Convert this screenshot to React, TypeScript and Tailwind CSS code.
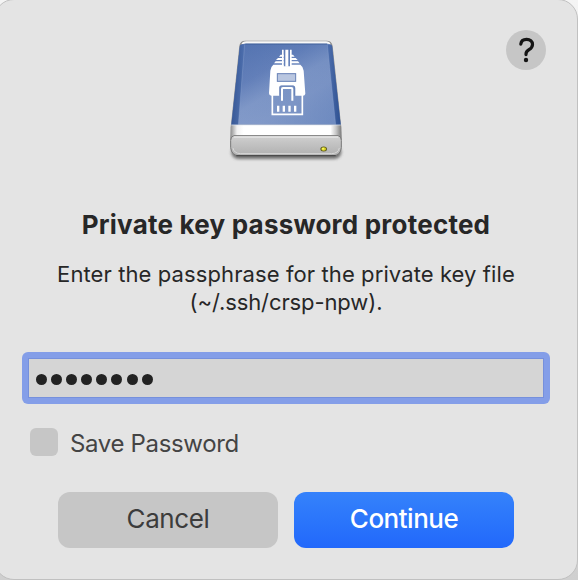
function DriveIcon() {
  return (
    <svg width="140" height="140" viewBox="0 0 420 420" className="block">
      <defs>
        <linearGradient id="top" x1="0.1" y1="0" x2="0.9" y2="1">
          <stop offset="0" stopColor="#4f6fae" />
          <stop offset="0.3" stopColor="#5f7cb7" />
          <stop offset="0.5" stopColor="#7d96c6" />
          <stop offset="0.68" stopColor="#7b94c5" />
          <stop offset="1" stopColor="#5f7fb9" />
        </linearGradient>
        <linearGradient id="shade" x1="0" y1="0" x2="0" y2="1">
          <stop offset="0" stopColor="#5b7ab5" stopOpacity="0.4" />
          <stop offset="0.45" stopColor="#6f8ac0" stopOpacity="0.2" />
          <stop offset="1" stopColor="#8fa4cf" stopOpacity="0.35" />
        </linearGradient>
        <linearGradient id="left" x1="0" x2="1">
          <stop offset="0" stopColor="#2b4d8d" />
          <stop offset="1" stopColor="#4d6fae" />
        </linearGradient>
        <linearGradient id="right" x1="0" x2="1">
          <stop offset="0" stopColor="#4a6cac" />
          <stop offset="1" stopColor="#274a8b" />
        </linearGradient>
        <linearGradient id="lip" x1="0" x2="1">
          <stop offset="0" stopColor="#8c8c8c" />
          <stop offset="0.06" stopColor="#f2f2f2" />
          <stop offset="0.12" stopColor="#ffffff" />
          <stop offset="0.9" stopColor="#ffffff" />
          <stop offset="0.95" stopColor="#c6c6c6" />
          <stop offset="1" stopColor="#777777" />
        </linearGradient>
        <linearGradient id="front" x1="0" y1="0" x2="0" y2="1">
          <stop offset="0" stopColor="#d0d0d0" />
          <stop offset="0.6" stopColor="#bcbcbc" />
          <stop offset="1" stopColor="#b0b0b0" />
        </linearGradient>
        <filter id="soft" x="-10%" y="-50%" width="120%" height="200%">
          <feGaussianBlur stdDeviation="5" />
        </filter>
      </defs>
      <rect x="46" y="347" width="330" height="40" rx="22" fill="#555" opacity="0.8" filter="url(#soft)" />
      <path d="M70 48Q72 32 88 32H332Q347 32 350 48L376 292V330H44V292Z" fill="#8d8d8d" />
      <path d="M76 43Q79 34 91 34H330Q341 34 344 43Z" fill="#f8f8f8" />
      <path d="M72 46Q76 41 86 41H334Q345 41 348 48L374 284H46Z" fill="url(#top)" />
      <path d="M72 46Q76 41 86 41H334Q345 41 348 48L374 284H46Z" fill="url(#shade)" />
      <path d="M72 46L86 44L67 284H46Z" fill="url(#left)" opacity="0.85" />
      <path d="M348 46L334 44L359 284H374Z" fill="url(#right)" opacity="0.9" />
      <path d="M86 44L67 284M334 44L359 284" stroke="#8fa6d1" strokeWidth="2" opacity="0.55" />
      <path d="M88 42H333" stroke="#34558f" strokeWidth="2" />
      <path d="M45 285H375L377 330H43Z" fill="url(#lip)" />
      <path d="M46 285H374" stroke="#dfe5ee" strokeWidth="2" />
      <path d="M54 317H366Q376 319 376 331V353Q374 376 350 378H70Q46 376 44 353V331Q44 319 54 317Z" fill="url(#front)" stroke="#777" strokeWidth="3" />
      <path d="M53 321H367" stroke="#f2f2f2" strokeWidth="3" />
      <path d="M51 354Q54 370 73 371H347Q367 370 370 354" fill="none" stroke="#d8d8d8" strokeWidth="3" />
      <path d="M61 377H359" stroke="#4c4c4c" strokeWidth="4" />
      <ellipse cx="323" cy="357" rx="10" ry="7.5" fill="#5e5b22" />
      <ellipse cx="323" cy="357" rx="7" ry="5" fill="#ddd824" />
      <circle cx="321" cy="356" r="2.5" fill="#ffff78" />
      <g fill="#fff">
        <path d="M198 59H203V110H198ZM208 59H217V110H208ZM222 59H227V110H222Z" />
        <path d="M194 74H203V80H189ZM222 74H231L236 80H222ZM186 84H203V90H180ZM222 84H239L245 90H222ZM179 94H203V100H174ZM222 94H246L251 100H222Z" />
        <path d="M172 104H203V109H222V104H253Q261 109 263 122L268 191Q267 197 261 197H238V173Q237 167 230 167H197Q190 167 190 173V197H166Q159 197 159 190L163 122Q165 109 172 104Z" />
        <path d="M169 193V253H259V193" fill="none" stroke="#fff" strokeWidth="5" />
        <path d="M198 212V177Q198 174 201 174H226Q229 174 229 177V212" fill="none" stroke="#fff" strokeWidth="6" />
        <path d="M183 227H190V245H183ZM200 227H207V245H200ZM217 227H224V245H217ZM234 227H241V245H234Z" />
      </g>
      <rect x="184" y="131" width="55" height="23" fill="#b9c6e0" stroke="#6680b5" strokeWidth="3" />
      <path d="M192 197V170Q192 168 195 168H232Q235 168 235 170V197" fill="none" stroke="#6680b5" strokeWidth="3" />
    </svg>
  );
}

export default function App() {
  return (
    <div className="h-[580px] w-[578px] overflow-hidden bg-linear-to-b from-[#f4f4f4] to-[#cfcfcf] font-['Inter','Liberation_Sans',sans-serif] text-[#272727]">
      <main className="-ml-[6px] -mt-px flex h-[581px] w-[584px] flex-col rounded-[20px] border border-[#c0c0c0] bg-[#e4e4e4]">
        <header className="flex h-[170px] pl-[221px] pt-[30px]">
          <DriveIcon />
          <button className="ml-[150px] flex h-10 w-10 shrink-0 items-center justify-center rounded-full bg-[#c6c6c6]" aria-label="Help">
            <svg width="40" height="40" viewBox="0 0 40 40" fill="none">
              <path d="M14.8 14.2C15.1 11.1 17.4 9.4 20.6 9.4C24.1 9.4 26.5 11.5 26.5 14.5C26.5 17 25.2 18.3 23 19.7C20.9 21 20 21.9 20 24V24.6" stroke="#151515" strokeWidth="3.2" strokeLinecap="round" />
              <circle cx="20" cy="30" r="2.2" fill="#151515" />
            </svg>
          </button>
        </header>
        <section className="flex w-[582px] flex-col items-center whitespace-nowrap pt-[39px]">
          <h1 className="text-[26px] font-bold leading-8 tracking-[0.22px]">Private key password protected</h1>
          <p className="mt-[19px] text-center text-[22px] leading-7 tracking-[0.1px]">
            Enter the passphrase for the private key file
            <br />
            <span className="tracking-[-0.1px]">(~/.ssh/crsp-npw).</span>
          </p>
        </section>
        <div className="ml-[27px] mt-[36px] flex h-[52px] w-[528px] shrink-0 rounded-md bg-[#849ee8] p-1.5">
          <div className="flex flex-1 items-center gap-[4.1px] border border-[#7690dc] bg-[#d5d5d5] pl-[7px] pt-[2px]">
            {[0, 1, 2, 3, 4, 5, 6, 7].map((dot) => (
              <span key={dot} className="h-[11px] w-[11px] rounded-full bg-[#222]" />
            ))}
          </div>
        </div>
        <label className="ml-[35px] mt-6 flex h-7 items-center gap-3 whitespace-nowrap text-[24px] leading-7 tracking-[-0.34px] text-[#444]">
          <span className="h-7 w-7 rounded-md bg-[#c6c6c6]" />
          <span className="pt-[3px]">Save Password</span>
        </label>
        <div className="ml-[63px] mt-9 flex gap-4 text-[26px] leading-8">
          <button className="h-14 w-[220px] rounded-xl bg-[#c6c6c6] pb-0.5 tracking-[-0.4px] text-[#3c3c3c]">Cancel</button>
          <button className="h-14 w-[220px] rounded-xl bg-linear-to-b from-[#3582fb] to-[#2268fb] pb-0.5 font-medium tracking-[-0.5px] text-white">Continue</button>
        </div>
      </main>
    </div>
  );
}
